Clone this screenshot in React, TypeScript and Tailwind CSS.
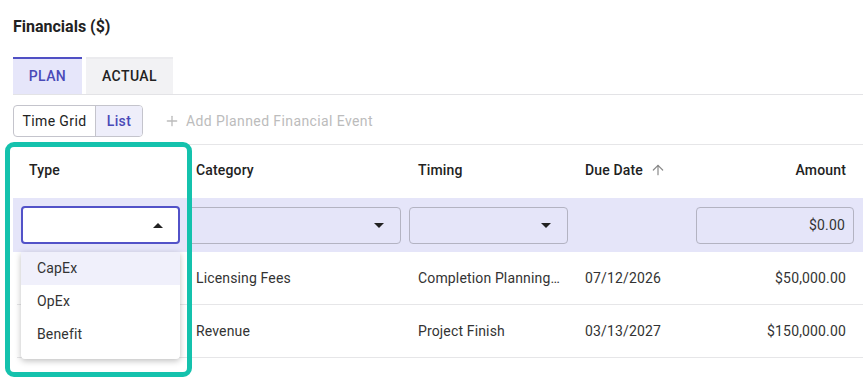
import { ArrowUp, Plus } from 'lucide-react';

const cols = 'grid grid-cols-[167px_221px_167px_120px_166px]';

function Caret({ up = false }: { up?: boolean }) {
  return (
    <svg width="10" height="5" viewBox="0 0 10 5" className="shrink-0">
      {up ? <path d="M0 5 L5 0 L10 5 Z" fill="#222" /> : <path d="M0 0 L5 5 L10 0 Z" fill="#222" />}
    </svg>
  );
}

function SelectBox() {
  return (
    <div className="flex h-[37px] items-center justify-end rounded-[4px] border border-[#b3b3c2] pr-[16px]">
      <Caret />
    </div>
  );
}

const rows = [
  { category: 'Licensing Fees', timing: 'Completion Planning…', due: '07/12/2026', amount: '$50,000.00' },
  { category: 'Revenue', timing: 'Project Finish', due: '03/13/2027', amount: '$150,000.00' },
];

export default function App() {
  return (
    <div className="relative h-[382px] w-[863px] overflow-hidden bg-white font-['Roboto',sans-serif] text-[14px] tracking-[0.15px] text-[#333]">
      <div className="pl-[13px] pt-[17px]">
        <h2 className="text-[16px] font-bold leading-[20px] tracking-normal text-[#222]">Financials ($)</h2>

        <div className="mt-[20px] flex gap-[4px] border-b border-[#e3e3e6] tracking-[0.4px]">
          <div className="flex h-[37px] w-[69px] items-center justify-center border-t-2 border-[#5050c4] bg-[#e6e6fa] text-[14px] font-medium text-[#4a4ab8]">
            PLAN
          </div>
          <div className="flex h-[37px] w-[87px] items-center justify-center border-t-2 border-[#ebebee] bg-[#f2f2f4] text-[14px] font-medium text-[#222]">
            ACTUAL
          </div>
        </div>

        <div className="mt-[10px] flex items-center tracking-[0.4px]">
          <div className="flex h-[32px] overflow-hidden rounded-[4px] border border-[#c4c4cc]">
            <div className="flex w-[81px] items-center justify-center text-[#222]">Time Grid</div>
            <div className="flex w-[47px] items-center justify-center border-l border-[#c4c4cc] bg-[#eeeefa] font-medium text-[#4a4ab8]">
              List
            </div>
          </div>
          <div className="ml-[21px] flex items-center gap-[6px] text-[#bcbcbc]">
            <Plus size={16} strokeWidth={2} />
            <span>Add Planned Financial Event</span>
          </div>
        </div>

        <div className="mt-[7px] border-t border-[#e6e6e8] pl-[4px]">
          <div className={`${cols} h-[53px] items-center pb-[3px] font-medium text-[#222]`}>
            <div className="pl-[12px]">Type</div>
            <div className="pl-[12px]">Category</div>
            <div className="pl-[13px]">Timing</div>
            <div className="flex items-center gap-[7px] pl-[13px]">
              Due Date <ArrowUp size={16} strokeWidth={1.8} className="text-[#8a8a8a]" />
            </div>
            <div className="pr-[12px] text-right">Amount</div>
          </div>

          <div className={`${cols} -ml-[4px] h-[54px] items-center bg-[#e5e5f9] pl-[4px]`}>
            <div className="relative px-[4px]">
              <div className="flex h-[38px] items-center justify-end rounded-[4px] border-2 border-[#5252c8] bg-white pr-[15px]">
                <Caret up />
              </div>
              <div className="absolute left-[4px] right-[4px] top-[46px] z-10 rounded-b-[4px] bg-white pb-[8px] shadow-[0_2px_6px_rgba(0,0,0,0.25)]">
                <div className="flex h-[33px] items-center bg-[#f0f0fb] pl-[16px]">CapEx</div>
                <div className="flex h-[33px] items-center pl-[16px]">OpEx</div>
                <div className="flex h-[33px] items-center pl-[16px]">Benefit</div>
              </div>
            </div>
            <div className="px-[4px]">
              <SelectBox />
            </div>
            <div className="px-[4px]">
              <SelectBox />
            </div>
            <div />
            <div className="px-[4px]">
              <div className="flex h-[37px] items-center justify-end rounded-[4px] border border-[#b3b3c2] pr-[8px]">
                $0.00
              </div>
            </div>
          </div>

          {rows.map((r) => (
            <div key={r.due} className={`${cols} h-[53px] items-center border-b border-[#e6e6e8]`}>
              <div className="pl-[12px]" />
              <div className="pl-[12px]">{r.category}</div>
              <div className="truncate pl-[13px]">{r.timing}</div>
              <div className="pl-[13px]">{r.due}</div>
              <div className="pr-[12px] text-right">{r.amount}</div>
            </div>
          ))}
          <div className="h-[25px] border-b border-[#e6e6e8]" />
        </div>
      </div>

      <div className="pointer-events-none absolute left-[5px] top-[142px] z-20 h-[235px] w-[187px] rounded-[9px] border-[5px] border-[#14c2ad]" />
    </div>
  );
}
